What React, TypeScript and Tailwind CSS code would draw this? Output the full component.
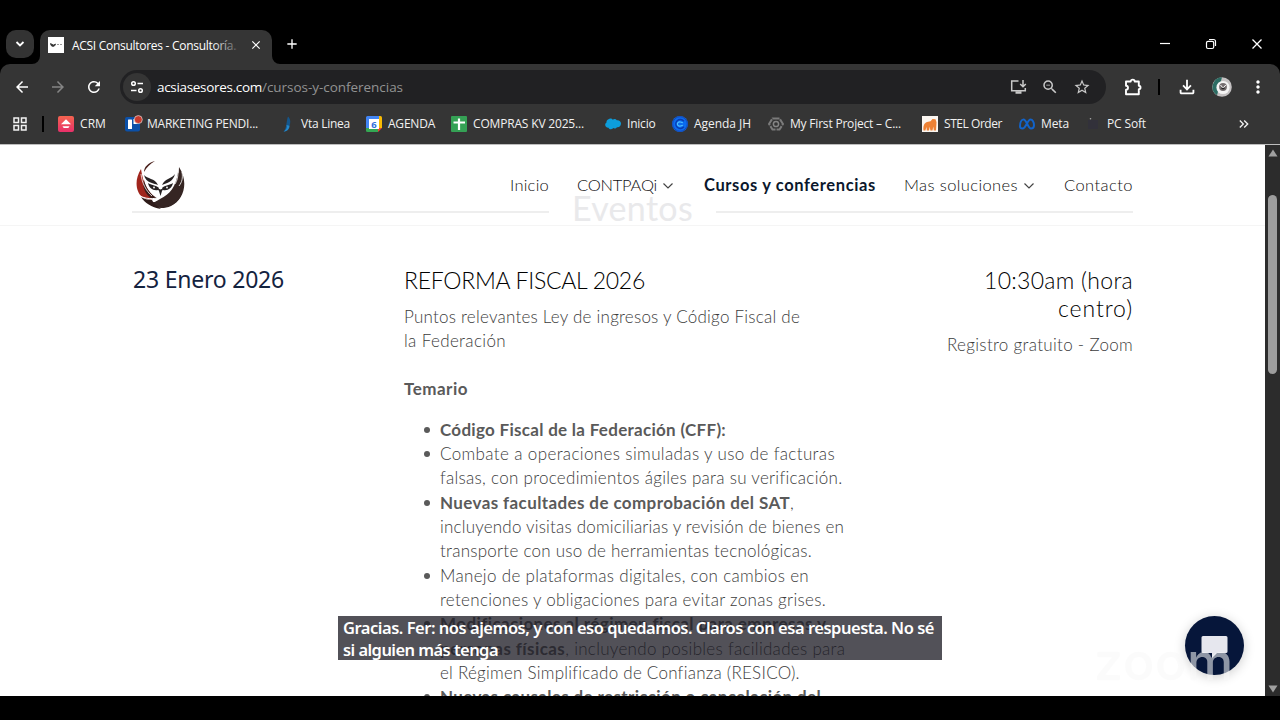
import { useLayoutEffect, useRef, type ReactNode } from "react";
import {
  MdAdd, MdArrowBack, MdArrowForward, MdClose, MdKeyboardDoubleArrowRight, MdMoreVert,
  MdOutlineFileDownload, MdOutlineGridView, MdRefresh, MdStarBorder, MdZoomOut,
} from "react-icons/md";

/** Single line of text whose tracking is computed so that it spans `w` pixels. */
function Fit({ w, className = "", children }: { w: number; className?: string; children: string }) {
  const ref = useRef<HTMLSpanElement>(null);
  useLayoutEffect(() => {
    const el = ref.current;
    if (!el) return;
    el.style.letterSpacing = "0px";
    const natural = el.getBoundingClientRect().width;
    el.style.letterSpacing = `${(w - natural) / children.length}px`;
  }, [w, children]);
  return <span ref={ref} className={`inline-block whitespace-pre ${className}`}>{children}</span>;
}

function Slot({ className = "", children }: { className?: string; children: ReactNode }) {
  return <span className={`flex h-8 w-8 shrink-0 items-center justify-center ${className}`}>{children}</span>;
}

const icons = {
  crm: (
    <svg viewBox="0 0 16 16" className="h-4 w-4">
      <defs><linearGradient id="crm" x1="0" y1="0" x2="0" y2="1"><stop stopColor="#f4644f" /><stop offset="1" stopColor="#e8306a" /></linearGradient></defs>
      <rect width="16" height="16" rx="2" fill="url(#crm)" />
      <path d="M8 3.200 13 8.300H3z" fill="#fff" /><path d="M4.500 10.200h7L10.300 12H5.700z" fill="#fff" />
    </svg>
  ),
  trello: (
    <svg viewBox="0 0 16 16" className="h-4 w-4 overflow-visible">
      <rect y="1" width="15" height="14.500" rx="2" fill="#0b50a8" />
      <rect x="3" y="3.500" width="4" height="9.500" rx=".5" fill="#fff" />
      <rect x="8.500" y="3" width="4" height="5" fill="#fff" />
      <circle cx="13.300" cy="3.600" r="4" fill="#c9392c" stroke="#ddd" strokeWidth=".7" />
    </svg>
  ),
  vta: (
    <svg viewBox="0 0 16 16" className="h-4 w-4">
      <path d="M9 .5c4 3 3 12-4.500 15.300C8 12 7 6 9 .5z" fill="#14568c" />
      <path d="M7.500 9c1 3-1 5.500-3 6.800 4-.5 6-3 6-6z" fill="#2388cc" />
    </svg>
  ),
  agenda: (
    <svg viewBox="0 0 16 16" className="h-4 w-4">
      <path d="M0 1.500Q0 0 1.500 0H13v3H3v10H0z" fill="#4285f4" />
      <path d="M13 0h1.500Q16 0 16 1.500V12h-3z" fill="#f9bb04" />
      <path d="M0 12h12v4H1.500Q0 16 0 14.500z" fill="#34a853" />
      <path d="M12 16v-4h4z" fill="#ea4335" />
      <rect x="3" y="3" width="10" height="10" fill="#fff" />
      <text x="8" y="11.500" textAnchor="middle" fontSize="9.500" fontWeight="700" fontFamily="Open Sans, sans-serif" fill="#2f6fdb">6</text>
    </svg>
  ),
  sheets: (
    <svg viewBox="0 0 16 16" className="h-4 w-4">
      <rect width="16" height="16" rx="1" fill="#35a155" />
      <path d="M8 2.500v11.500M2.500 6.500h11.500" stroke="#fff" strokeWidth="2.200" />
    </svg>
  ),
  sales: (
    <svg viewBox="0 0 16 16" className="h-4 w-4">
      <path d="M3.500 3.200C5 2 7 2.600 7.800 3.800c1-1 3-1 4 .4C14 3.800 16 5.200 16 7.600s-2 4-4 3.600c-1 1.400-2.500 1.500-3.700.9-1 1.700-4 1.500-4.800-.4C1.500 11.800.2 10.500.2 8.800c0-1 .5-1.900 1.300-2.300C1.200 5 2.200 3.700 3.500 3.200z" fill="#0d9ddb" />
    </svg>
  ),
  jh: (
    <svg viewBox="0 0 16 16" className="h-4 w-4">
      <circle cx="8" cy="8" r="8" fill="#0a6bf0" />
      <path d="M11.800 5.200a4.500 4.500 0 1 0 0 5.600" stroke="#0a3db0" strokeWidth="1.400" fill="none" />
      <path d="M10.800 6.600 8.500 6a2.200 2.200 0 1 0 0 4l2.300-.6" stroke="#4fc0ff" strokeWidth="1.200" fill="none" />
      <circle cx="8" cy="8" r="7.300" fill="none" stroke="#1748b5" strokeWidth="1" />
    </svg>
  ),
  project: (
    <svg viewBox="0 0 16 16" className="h-4 w-4">
      <path d="M4.500 2.500h7L15 8l-3.500 5.500h-7L1 8z" fill="none" stroke="#7b7b7b" strokeWidth="2" strokeDasharray="7 1" />
      <circle cx="8" cy="8" r="2.600" fill="none" stroke="#858585" strokeWidth="1.500" />
    </svg>
  ),
  stel: (
    <svg viewBox="0 0 16 16" className="h-4 w-4">
      <rect width="16" height="16" fill="#fbf6f1" />
      <path d="M1.500 14.500c-.5-4 .5-7.500 3.500-8.500l3.500-.8L10.500 3l3 .3 1 3L14 14.500h-2.200l-.5-4-.8 4H8.400l-.6-3.800-.8 3.800H4.800l-.4-3.500-1 3.500z" fill="#ee8134" />
    </svg>
  ),
  meta: (
    <svg viewBox="0 0 16 16" className="h-4 w-4">
      <path d="M1 10.200C1 6.500 2.500 3.500 4.500 3.500 7.500 3.500 9 12.500 12 12.500c2 0 3-1 3-3.200 0-3-1.500-5.800-3.500-5.800C8.500 3.500 7 12.500 3.500 12.500 2 12.500 1 11.700 1 10.200z" fill="none" stroke="#1263c9" strokeWidth="2" />
    </svg>
  ),
  pc: (
    <svg viewBox="0 0 16 16" className="h-4 w-4">
      <rect x="3" y="4" width="10" height="9" fill="#32313a" /><circle cx="5.500" cy="2.800" r=".8" fill="#aaa" />
    </svg>
  ),
};

const bookmarks = [
  { icon: icons.crm, label: "CRM", w: 26, slot: "w-[67px]" },
  { icon: icons.trello, label: "MARKETING PENDI...", w: 111, slot: "w-[154px]" },
  { icon: icons.vta, label: "Vta Linea", w: 49, slot: "w-[87px]" },
  { icon: icons.agenda, label: "AGENDA", w: 47, slot: "w-[85px]" },
  { icon: icons.sheets, label: "COMPRAS KV 2025...", w: 111, slot: "w-[154px]" },
  { icon: icons.sales, label: "Inicio", w: 28.5, slot: "w-[67px]" },
  { icon: icons.jh, label: "Agenda JH", w: 57, slot: "w-[96px]" },
  { icon: icons.project, label: "My First Project – C...", w: 111, slot: "w-[154px]" },
  { icon: icons.stel, label: "STEL Order", w: 58, slot: "w-[97px]" },
  { icon: icons.meta, label: "Meta", w: 28, slot: "w-[66px]" },
  { icon: icons.pc, label: "PC Soft", w: 39, slot: "w-[67px]" },
];

function TabStrip() {
  return (
    <div className="flex h-10 items-end bg-black text-white">
      <div className="mb-[6px] ml-[6px] flex h-7 w-7 items-center justify-center rounded-[10px] bg-[#333]">
        <svg viewBox="0 0 10 10" className="h-[10px] w-[10px]"><path d="M1.500 3 5 6.500 8.500 3" fill="none" stroke="#fff" strokeWidth="1.800" /></svg>
      </div>
      <svg viewBox="0 0 8 8" className="-ml-0.5 h-2 w-2"><path d="M8 0v8H0a8 8 0 0 0 8-8z" fill="#353535" /></svg>
      <div className="flex h-[34px] w-[232px] items-center rounded-t-[10px] bg-[#353535] pl-2 pb-1">
        <svg viewBox="0 0 16 16" className="h-4 w-4 shrink-0">
          <rect width="16" height="16" fill="#fff" />
          <path d="M2.500 6.500c0 3.500 4.500 4 5 .5L5.500 8z" fill="#333" stroke="#333" strokeWidth=".8" />
          <path d="M9 7.500h2M12 7.500h2" stroke="#999" />
        </svg>
        <span className="relative ml-2 flex pt-px text-xs">
          <Fit w={164}>ACSI Consultores - Consultoría.</Fit>
          <span className="absolute right-0 top-0 h-full w-6 bg-linear-to-r from-transparent to-[#353535]/80" />
        </span>
        <MdClose className="ml-[13px] h-[14px] w-[14px]" />
      </div>
      <svg viewBox="0 0 8 8" className="h-2 w-2"><path d="M0 0v8h8a8 8 0 0 1-8-8z" fill="#353535" /></svg>
      <MdAdd className="mb-3 ml-1 h-4 w-4" />
      <div className="ml-auto mb-[14px] flex items-center">
        <svg viewBox="0 0 12 12" className="mr-[34px] h-3 w-3"><path d="M1 5.500h10" stroke="#fff" strokeWidth="1.200" /></svg>
        <svg viewBox="0 0 12 12" className="mr-[34px] h-3 w-3" fill="none" stroke="#fff" strokeWidth="1.200">
          <rect x="1.500" y="3.300" width="7.200" height="7.200" rx="1.500" /><path d="M4 1.500h4.500q2 0 2 2V8" />
        </svg>
        <svg viewBox="0 0 12 12" className="mr-[17px] h-3 w-3"><path d="m1.500 1.500 9 9m0-9-9 9" stroke="#fff" strokeWidth="1.300" /></svg>
      </div>
    </div>
  );
}

function Toolbar() {
  return (
    <div className="flex h-[46px] items-center rounded-t-[10px] bg-[#353535] text-white">
      <Slot className="ml-[6px]"><MdArrowBack className="h-[18px] w-[18px]" /></Slot>
      <Slot className="ml-1 text-[#858585]"><MdArrowForward className="h-[18px] w-[18px]" /></Slot>
      <Slot className="ml-1"><MdRefresh className="h-[18px] w-[18px]" /></Slot>
      <div className="ml-[10px] flex h-[34px] w-[986px] items-center rounded-full bg-[#212123] pl-[3px] pr-2">
        <span className="flex h-7 w-7 items-center justify-center rounded-full bg-[#353535]">
          <svg viewBox="0 0 14 14" className="h-[14px] w-[14px]" fill="none" stroke="#fff" strokeWidth="1.500">
            <circle cx="3.500" cy="3.500" r="1.800" /><path d="M7.500 3.500h5.500M1 10.500h5.500" /><circle cx="10.500" cy="10.500" r="1.800" />
          </svg>
        </span>
        <span className="ml-[6px] flex text-[13.5px] leading-5">
          <Fit w={105}>acsiasesores.com</Fit>
          <Fit w={141} className="text-[#929292]">/cursos-y-conferencias</Fit>
        </span>
        <span className="ml-auto flex text-[#c9c9c9]">
          <Slot>
            <svg viewBox="0 0 17 16" className="h-4 w-[17px]" fill="none" stroke="currentColor" strokeWidth="1.500">
              <path d="M8.500 2H1.700v9.700h13.600V9" /><path d="M5.500 13.500h6" strokeWidth="2.500" /><path d="M13 1v6.500M10.200 5l2.800 2.800L15.800 5" />
            </svg>
          </Slot>
          <Slot><MdZoomOut className="h-[18px] w-[18px]" /></Slot>
          <Slot><MdStarBorder className="h-[18px] w-[18px]" /></Slot>
        </span>
      </div>
      <Slot className="ml-[11px]">
        <svg viewBox="0 0 18 18" className="h-[18px] w-[18px]" fill="none" stroke="#fff" strokeWidth="1.900" strokeLinejoin="round">
          <path d="M2 3.500h4.700a2 1.900 0 0 1 4 0h4.100v4.300a1.700 1.700 0 0 1 0 3.400v5H2v-4.500a2 2 0 0 0 0-4z" />
        </svg>
      </Slot>
      <span className="ml-[9px] h-4 w-[2px] bg-black" />
      <Slot className="ml-[11px]"><MdOutlineFileDownload className="h-[22px] w-[22px]" /></Slot>
      <Slot className="ml-[3px]">
        <svg viewBox="0 0 20 20" className="h-5 w-5">
          <circle cx="10" cy="10" r="9.800" fill="#c4c1c2" /><path d="M10 .2a9.800 9.800 0 0 0-5 18z" fill="#2c6c63" />
          <circle cx="11" cy="10.500" r="6.600" fill="#f4f4f4" /><circle cx="11" cy="10" r="3.900" fill="#756e70" />
          <path d="M8.500 8 11 11l2.800-3" stroke="#fff" fill="none" /><path d="M9.500 11.500h3" stroke="#222" strokeWidth="1.500" />
        </svg>
      </Slot>
      <Slot className="ml-1"><MdMoreVert className="h-5 w-5" /></Slot>
    </div>
  );
}

function BookmarksBar() {
  return (
    <div className="flex h-[35px] items-center border-b border-[#bdbdbd] bg-[#353535] pb-[6px] text-xs text-[#f1f1f1]">
      <MdOutlineGridView className="ml-[11px] h-[18px] w-[18px]" />
      <span className="ml-[13px] mr-[14px] h-4 w-[2px] bg-black" />
      {bookmarks.map((b) => (
        <span key={b.label} className={`flex shrink-0 items-center gap-[6px] ${b.slot}`}>
          <span className="shrink-0">{b.icon}</span>
          <Fit w={b.w}>{b.label}</Fit>
        </span>
      ))}
      <MdKeyboardDoubleArrowRight className="ml-auto mr-7 h-4 w-4" />
    </div>
  );
}

function Chevron() {
  return <svg viewBox="0 0 12 8" className="ml-[5px] h-2 w-3"><path d="m1.500 1.500 4.500 4.500 4.500-4.500" fill="none" stroke="#444" strokeWidth="1.200" /></svg>;
}

function OwlLogo() {
  return (
    <svg viewBox="0 0 50 50" className="h-[50px] w-[50px]">
      <path d="M19 1C12 3 8 7 8 12 11 7 14 4 19 1z" fill="#4a201b" />
      <path d="M5 9C-2 20 0 32 6 37c5 3 10 3 14 1C13 33 7 24 5 9z" fill="#a0251c" />
      <path d="M8 20c2 8 6 14 13 18l-5 1C9 34 6 27 8 20z" fill="#3a1c19" />
      <path d="M43 7c10 15 5 33-8 39-9 4-18 2-24-4 8 1 13-1 17-4 10-5 15-17 15-31z" fill="#352523" />
      <path d="M5 37c4 6 10 10 20 12-4-3-8-6-9-9-4 0-8-1-11-3z" fill="#2e1b19" />
      <path d="M24 39C34 34 40 27 42 12c9 15 4 28-6 33-6 2-12 1-17-3z" fill="#352523" />
      <path d="M4 36c8 4 17 3 22 0" stroke="#fff" strokeWidth="1" fill="none" />
      <path d="M42 12c0 5-1 9-3 12M46 12c1 6 0 10-3 14M5 14c1 9 5 17 11 22" stroke="#fff" strokeWidth=".8" fill="none" />
      <path d="M8 15c3 4 11 3 14 10-5-2-12-2-14-10zM39 14c-3 5-10 4-13 11 5-2 11-3 13-11z" fill="#262122" />
      <path d="M12 23c3 2 8 2 11 5l-1 2c-5 1-9-2-10-7zM37 23c-3 2-8 2-11 5l1 2c5 1 9-2 10-7z" fill="#262122" />
      <path d="m21 28 3.500 1.500L28 28l-2 3-1.500 5L23 31z" fill="#262122" />
      <circle cx="18" cy="27.500" r=".9" fill="#fff" /><circle cx="31" cy="27.500" r=".9" fill="#fff" />
    </svg>
  );
}

function SiteHeader() {
  return (
    <header className="relative h-[81px] border-b border-[#f5f5f5] pb-px pl-[136px] pr-[132px] text-[16.5px] text-[#111]">
      <div className="absolute inset-x-[132px] top-[47px] flex h-10 items-center">
        <span className="h-[2px] w-[417px] bg-[#eee]" />
        <span className="-mt-2 flex w-[167px] justify-center text-[34px] leading-[38px] text-[#e9e9eb]"><Fit w={121}>Eventos</Fit></span>
        <span className="h-[2px] w-[417px] bg-[#eee]" />
      </div>
      <div className="relative flex h-full items-center">
        <OwlLogo />
        <nav className="ml-auto flex items-center pt-[2px] font-light">
          <Fit w={39}>Inicio</Fit>
          <span className="ml-7 flex items-center"><Fit w={80}>CONTPAQi</Fit><Chevron /></span>
          <Fit w={172} className="ml-[30px] font-bold text-[#0b172c]">Cursos y conferencias</Fit>
          <span className="ml-7 flex items-center"><Fit w={114}>Mas soluciones</Fit><Chevron /></span>
          <Fit w={69} className="ml-[29px]">Contacto</Fit>
        </nav>
      </div>
    </header>
  );
}

const topics: { text: string; w: number; bold?: boolean }[][][] = [
  [[{ text: "Código Fiscal de la Federación (CFF):", w: 286, bold: true }]],
  [
    [{ text: "Combate a operaciones simuladas y uso de facturas", w: 395 }],
    [{ text: "falsas, con procedimientos ágiles para su verificación.", w: 402 }],
  ],
  [
    [{ text: "Nuevas facultades de comprobación del SAT", w: 350, bold: true }, { text: ",", w: 4 }],
    [{ text: "incluyendo visitas domiciliarias y revisión de bienes en", w: 404 }],
    [{ text: "transporte con uso de herramientas tecnológicas.", w: 372 }],
  ],
  [
    [{ text: "Manejo de plataformas digitales, con cambios en", w: 369 }],
    [{ text: "retenciones y obligaciones para evitar zonas grises.", w: 386 }],
  ],
  [
    [{ text: "Modificaciones al régimen fiscal para empresas y", w: 386, bold: true }],
    [{ text: "personas físicas", w: 125, bold: true }, { text: ", incluyendo posibles facilidades para", w: 280 }],
    [{ text: "el Régimen Simplificado de Confianza (RESICO).", w: 359 }],
  ],
  [[{ text: "Nuevas causales de restricción o cancelación del", w: 381, bold: true }]],
];

function EventDetails() {
  return (
    <main className="flex items-start px-[132px] pt-10 text-[17px] font-light leading-[24.35px] text-[#3c3c3c]">
      <h2 className="w-[272px] pl-px font-['Noto_Sans','Open_Sans',sans-serif] text-[23px] font-normal leading-[27px] text-[#14233f]"><Fit w={151}>23 Enero 2026</Fit></h2>
      <section className="w-[450px]">
        <h2 className="text-[23px] leading-7 text-[#000]"><Fit w={241}>REFORMA FISCAL 2026</Fit></h2>
        <p className="mt-[10.500px] flex flex-col items-start">
          <Fit w={396}>Puntos relevantes Ley de ingresos y Código Fiscal de</Fit>
          <Fit w={102}>la Federación</Fit>
        </p>
        <p className="mt-6 font-bold text-[#5a5a5a]"><Fit w={64}>Temario</Fit></p>
        <ul className="mt-4">
          {topics.map((lines, i) => (
            <li key={i} className="flex">
              <span className="ml-5 mr-[10px] mt-[9px] h-[6px] w-[6px] shrink-0 rounded-full bg-[#5a5a5a]" />
              <div>
                {lines.map((parts, j) => (
                  <div key={j} className="flex h-[24.35px]">
                    {parts.map((p) => <Fit key={p.text} w={p.w} className={p.bold ? "font-bold text-[#5a5a5a]" : ""}>{p.text}</Fit>)}
                  </div>
                ))}
              </div>
            </li>
          ))}
        </ul>
      </section>
      <section className="ml-auto flex flex-col items-end">
        <h2 className="flex flex-col items-end text-[23px] leading-7 text-[#000]">
          <Fit w={149}>10:30am (hora</Fit>
          <Fit w={75}>centro)</Fit>
        </h2>
        <p className="mt-[10.500px]"><Fit w={186}>Registro gratuito - Zoom</Fit></p>
      </section>
    </main>
  );
}

function Scrollbar() {
  return (
    <div className="flex w-[15px] shrink-0 flex-col items-center bg-[#2c2c2c]">
      <svg viewBox="0 0 10 8" className="mt-1 h-2 w-[10px]"><path d="M5 .5 9.500 7.500h-9z" fill="#a0a0a0" /></svg>
      <span className="mt-[38px] h-[179px] w-[9px] rounded-full bg-[#9d9d9d]" />
      <svg viewBox="0 0 10 8" className="mb-[3px] mt-auto h-2 w-[10px]"><path d="M5 7.500 9.500.5h-9z" fill="#a0a0a0" /></svg>
    </div>
  );
}

export default function App() {
  return (
    <div className="relative h-[720px] w-[1280px] overflow-hidden bg-black py-6 font-['Open_Sans','Noto_Sans',sans-serif]">
      <TabStrip />
      <Toolbar />
      <BookmarksBar />
      <div className="flex h-[551px] overflow-hidden bg-white">
        <div className="w-[1265px] overflow-hidden font-['Lato',sans-serif]">
          <SiteHeader />
          <EventDetails />
        </div>
        <Scrollbar />
      </div>
      <div className="absolute left-[1185px] top-[616px] flex h-[59px] w-[59px] items-center justify-center rounded-full bg-[#06163a] shadow-[0_2px_12px_rgba(0,0,0,0.2)]">
        <svg viewBox="0 0 28 24" className="mt-[3px] h-6 w-7"><path d="M2 1h23a1.500 1.500 0 0 1 1.500 1.500v14A1.500 1.500 0 0 1 25 18H16l-5 5v-5H2a1.500 1.500 0 0 1-1.500-1.500v-14A1.500 1.500 0 0 1 2 1z" fill="#e6e7ee" /></svg>
      </div>
      <div className="absolute left-[1094px] top-[632px] font-['Inter',sans-serif] text-[52px] font-medium leading-[60px] text-white/55 [text-shadow:0_0_1px_rgba(0,0,0,0.04)]">
        <Fit w={140}>zoom</Fit>
      </div>
      <div className="absolute left-[338px] top-[616px] flex h-11 w-[604px] flex-col items-start bg-[#1e1c26]/77 pl-[5px] pt-[1px] font-['Noto_Sans',sans-serif] text-[16.5px] font-semibold leading-[22px] text-white">
        <Fit w={591}>Gracias. Fer: nos ajemos, y con eso quedamos. Claros con esa respuesta. No sé</Fit>
        <Fit w={155}>si alguien más tenga</Fit>
      </div>
    </div>
  );
}
